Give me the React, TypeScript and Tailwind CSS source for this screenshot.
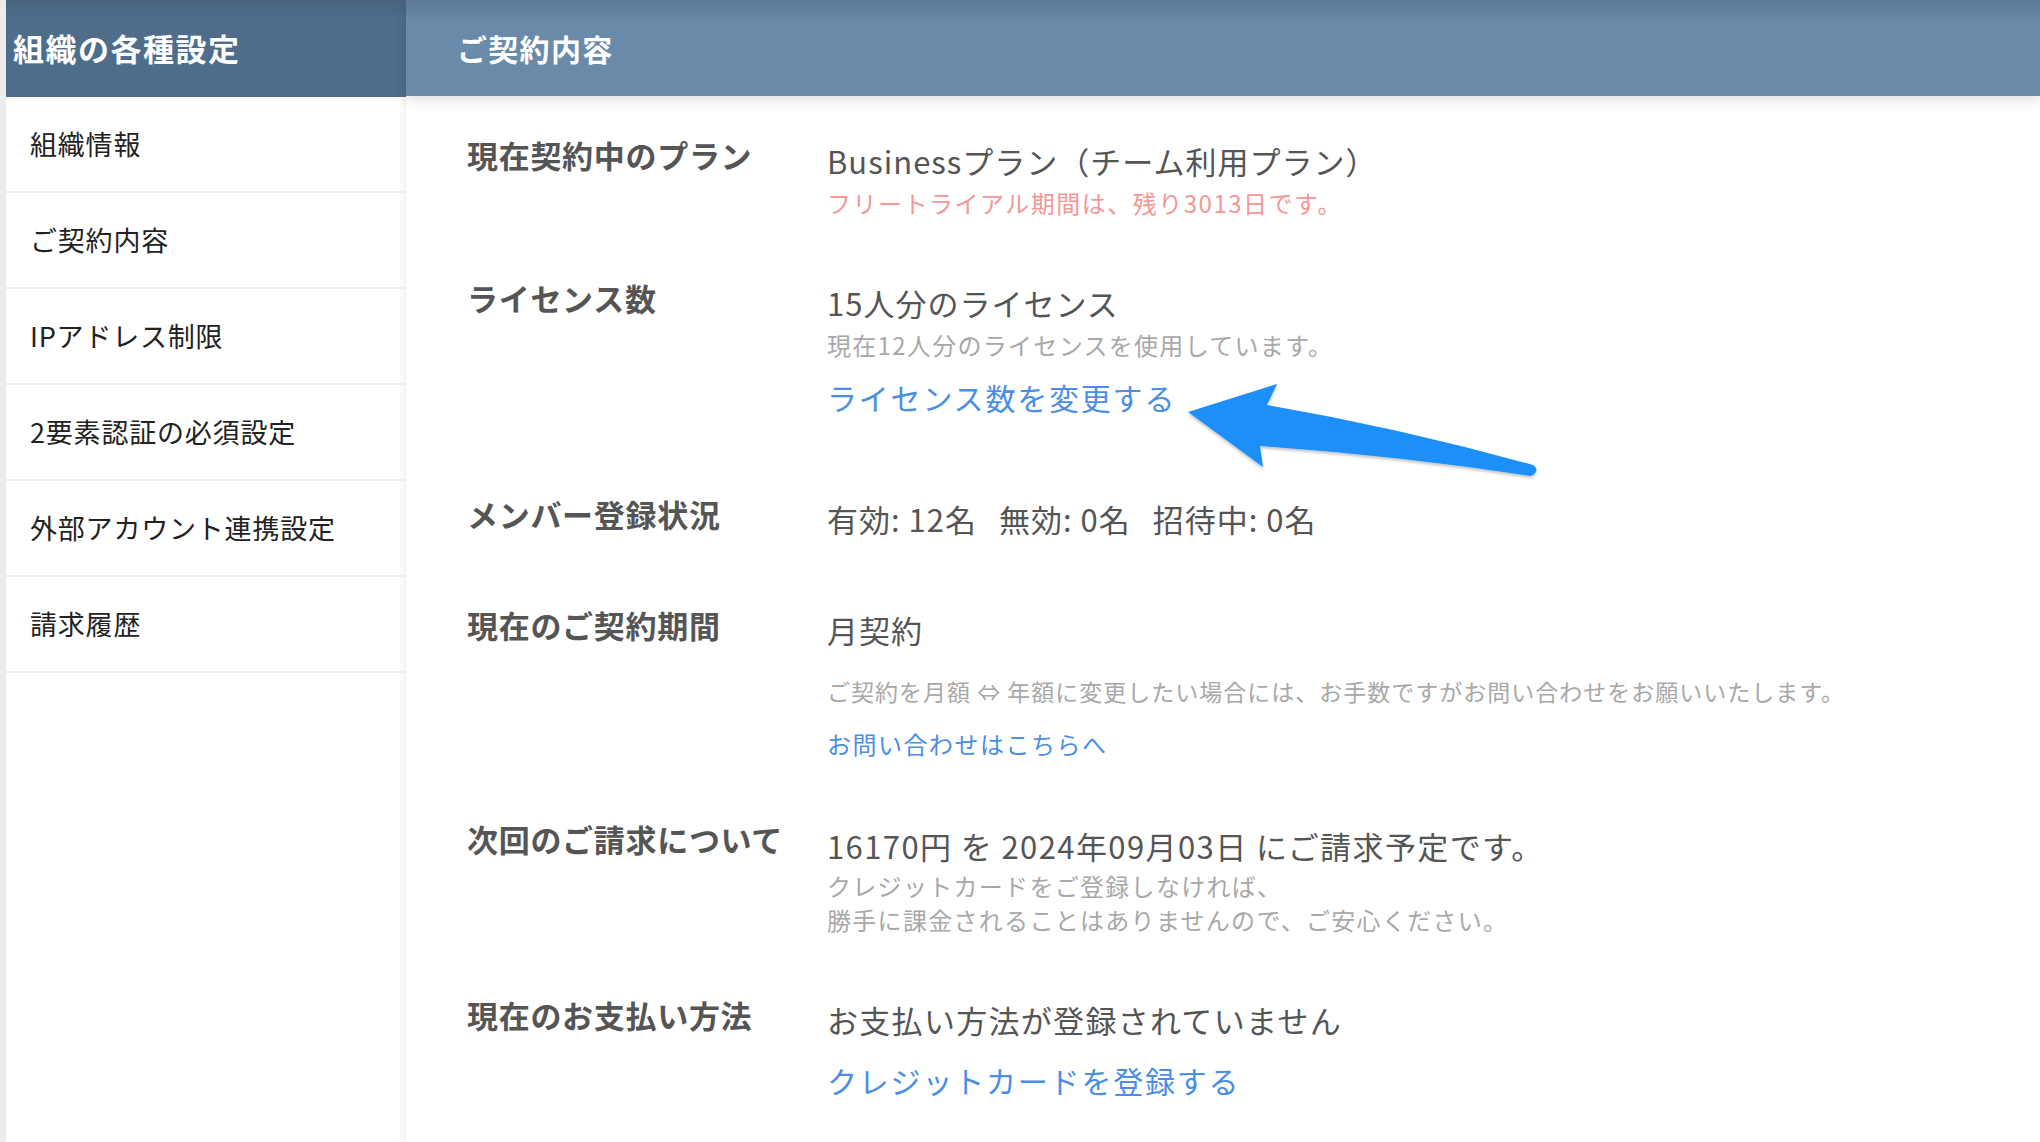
import React from 'react';

const font = { fontFamily: '"Noto Sans CJK JP", "Noto Sans", sans-serif' };

const menu = ['組織情報', 'ご契約内容', 'IPアドレス制限', '2要素認証の必須設定', '外部アカウント連携設定', '請求履歴'];

const Label: React.FC<{ children: React.ReactNode }> = ({ children }) => (
  <div className="w-[360px] shrink-0 text-[31px] leading-[40px] font-bold text-[#555] tracking-[0.7px]">{children}</div>
);

export default function App() {
  return (
    <div className="relative flex min-h-[1142px] bg-[#ececec] pl-[6px]" style={font}>
      {/* sidebar */}
      <aside className="w-[400px] shrink-0 bg-white shadow-[inset_-8px_0_8px_-6px_rgba(0,0,0,0.07)]">
        <div className="h-[97px] flex items-center pl-[7px] bg-[linear-gradient(to_bottom,#48647f_0px,#4e6d8a_20px)] text-white text-[31px] font-bold tracking-[1.5px]">
          組織の各種設定
        </div>
        <ul>
          {menu.map(item => (
            <li key={item} className="h-[96px] flex items-center pl-[24px] border-b-2 border-[#eeeeee] text-[27px] text-[#222] tracking-[0.8px]">
              {item}
            </li>
          ))}
        </ul>
      </aside>

      {/* main */}
      <main className="flex-1 bg-white">
        <header className="relative z-10 h-[96px] flex items-center pl-[51px] bg-[linear-gradient(to_bottom,#5d7a97_0px,#6a8aa9_22px)] text-white text-[30px] font-semibold tracking-[1.3px] shadow-[0_4px_12px_rgba(0,0,0,0.13)]">
          ご契約内容
        </header>

        <div className="pl-[61px] text-[#555]">
          <section className="flex mt-[39px]">
            <Label>現在契約中のプラン</Label>
            <div className="pt-[6px]">
              <div className="text-[31px] leading-[40px] tracking-[1px]">Businessプラン（チーム利用プラン）</div>
              <div className="text-[24px] leading-[44px] tracking-[1.5px] text-[#f39797]">フリートライアル期間は、残り3013日です。</div>
            </div>
          </section>

          <section className="flex mt-[53px]">
            <Label>ライセンス数</Label>
            <div className="pt-[5px]">
              <div className="text-[31px] leading-[40px] tracking-[1px]">15人分のライセンス</div>
              <div className="text-[24px] leading-[44px] tracking-[1.3px] text-[#a8a8a8]">現在12人分のライセンスを使用しています。</div>
              <a href="#" className="block text-[30px] leading-[60px] text-[#4a8ee6] tracking-[1.8px]">ライセンス数を変更する</a>
            </div>
          </section>

          <section className="flex mt-[67px]">
            <Label>メンバー登録状況</Label>
            <div className="pt-[5px] flex gap-[22px] text-[31px] leading-[40px] tracking-[1px]">
              <span>有効: 12名</span>
              <span>無効: 0名</span>
              <span>招待中: 0名</span>
            </div>
          </section>

          <section className="flex mt-[66px]">
            <Label>現在のご契約期間</Label>
            <div className="pt-[5px]">
              <div className="text-[31px] leading-[40px] tracking-[1px]">月契約</div>
              <div className="mt-[24px] text-[23px] leading-[34px] tracking-[1px] text-[#a8a8a8]">ご契約を月額 ⇔ 年額に変更したい場合には、お手数ですがお問い合わせをお願いいたします。</div>
              <a href="#" className="block mt-[19px] text-[24px] leading-[34px] tracking-[1.5px] text-[#4a8ee6]">お問い合わせはこちらへ</a>
            </div>
          </section>

          <section className="flex mt-[58px]">
            <Label>次回のご請求について</Label>
            <div className="pt-[7px]">
              <div className="text-[31px] leading-[40px] tracking-[1.4px]">16170円 を 2024年09月03日 にご請求予定です。</div>
              <div className="mt-[3px] text-[24px] leading-[34px] tracking-[1.3px] text-[#a8a8a8]">
                クレジットカードをご登録しなければ、<br />
                勝手に課金されることはありませんので、ご安心ください。
              </div>
            </div>
          </section>

          <section className="flex mt-[58px]">
            <Label>現在のお支払い方法</Label>
            <div className="pt-[5px]">
              <div className="text-[31px] leading-[40px] tracking-[1.3px]">お支払い方法が登録されていません</div>
              <a href="#" className="block mt-[20px] text-[30px] leading-[40px] text-[#4a8ee6] tracking-[1.8px]">クレジットカードを登録する</a>
            </div>
          </section>
        </div>
      </main>

      {/* annotation arrow */}
      <svg className="absolute left-0 top-0 pointer-events-none" width="2040" height="1142" viewBox="0 0 2040 1142">
        <defs>
          <filter id="sh" x="-10%" y="-20%" width="120%" height="160%">
            <feDropShadow dx="0" dy="2" stdDeviation="1.5" floodColor="#000" floodOpacity="0.25" />
          </filter>
        </defs>
        <path
          d="M1188 412 L1277 384 L1267 405 Q1400 428 1533 465 Q1541 470 1531 476 Q1400 456 1260 446 L1263 467 Z"
          fill="#1e8ff8"
          filter="url(#sh)"
        />
      </svg>
    </div>
  );
}
